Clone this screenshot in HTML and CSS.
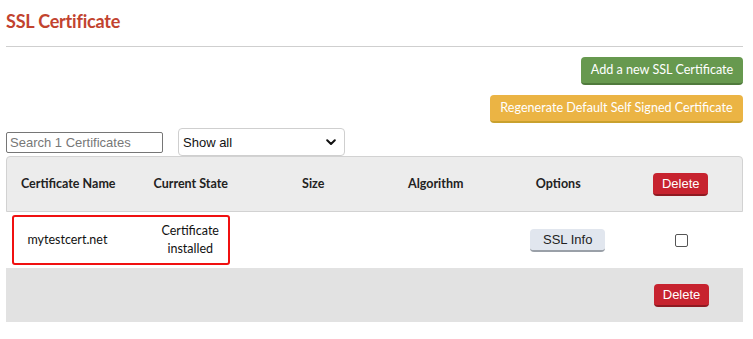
FILE: index.html
```html
<!DOCTYPE html>
<html>
<head>
<meta charset="utf-8">
<link rel="stylesheet" href="styles.css">
</head>
<body>
<div class="page">
  <h1 class="title">SSL Certificate</h1>
  <hr class="rule">
  <div class="actions">
    <button class="btn btn-green">Add a new SSL Certificate</button>
    <button class="btn btn-yellow">Regenerate Default Self Signed Certificate</button>
  </div>
  <div class="filters">
    <input class="search" type="text" placeholder="Search 1 Certificates">
    <div class="select">
      <span>Show all</span>
      <svg width="10" height="7" viewBox="0 0 10 7"><path d="M1.2 1.2 L5 5 L8.8 1.2" fill="none" stroke="#111" stroke-width="2" stroke-linecap="round" stroke-linejoin="round"/></svg>
    </div>
  </div>
  <div class="table">
    <div class="row head">
      <div class="cell">Certificate Name</div>
      <div class="cell">Current State</div>
      <div class="cell">Size</div>
      <div class="cell">Algorithm</div>
      <div class="cell">Options</div>
      <div class="cell"><button class="del">Delete</button></div>
    </div>
    <div class="row body">
      <div class="highlight"></div>
      <div class="cell">mytestcert.net</div>
      <div class="cell">Certificate<br>installed</div>
      <div class="cell"></div>
      <div class="cell"></div>
      <div class="cell"><button class="info">SSL Info</button></div>
      <div class="cell"><span class="check"></span></div>
    </div>
    <div class="row foot">
      <div class="cell"></div>
      <div class="cell"></div>
      <div class="cell"></div>
      <div class="cell"></div>
      <div class="cell"></div>
      <div class="cell"><button class="del">Delete</button></div>
    </div>
  </div>
</div>
</body>
</html>
```

FILE: styles.css
```css
* { box-sizing: border-box; }
html, body { margin: 0; padding: 0; background: #fff; }
body { font-family: Lato, "Liberation Sans", sans-serif; color: #222; }
.page { padding: 0 10px 0 6px; width: 753px; }
.title {
  margin: 0;
  padding-top: 10px;
  font-size: 18px;
  line-height: 22px;
  font-weight: 700;
  color: #c2432f;
  letter-spacing: -0.2px;
}
.rule {
  margin: 14px 0 0 0;
  border: 0;
  border-top: 1px solid #cfcfcf;
  height: 0;
}
.actions {
  display: flex;
  flex-direction: column;
  align-items: flex-end;
  gap: 10px;
  margin-top: 10px;
}
.btn {
  font-family: Lato, sans-serif;
  font-size: 12.6px;
  color: #fff;
  border: 0;
  border-radius: 4px;
  height: 28px;
  padding: 0;
  line-height: 26px;
  white-space: nowrap;
  cursor: pointer;
}
.btn-green {
  width: 162px;
  background: #67994f;
  border-bottom: 2px solid #4f7a3c;
}
.btn-yellow {
  width: 253px;
  background: #ebb444;
  border-bottom: 2px solid #c9a12e;
}
.filters {
  display: flex;
  align-items: center;
  gap: 15px;
  margin-top: 5px;
  height: 28px;
}
.search {
  width: 157px;
  height: 21px;
  border: 1px solid #767676;
  border-radius: 2px;
  font-family: "Liberation Sans", Arial, sans-serif;
  font-size: 13px;
  padding: 0 3px;
  margin-top: 1px;
}
.search::placeholder { color: #777; }
.select {
  width: 167px;
  height: 28px;
  border: 1px solid #cfcfcf;
  border-radius: 4px;
  display: flex;
  align-items: center;
  justify-content: space-between;
  padding: 0 8px 0 4px;
  font-family: "Liberation Sans", Arial, sans-serif;
  font-size: 13px;
  color: #111;
}
.table {
  margin-top: 0;
  width: 737px;
}
.row {
  display: flex;
  align-items: center;
  position: relative;
}
.cell {
  flex: 1 1 0;
  text-align: center;
  font-size: 12.5px;
  line-height: 18px;
  display: flex;
  justify-content: center;
  align-items: center;
}
.head {
  height: 56px;
  background: #ececec;
  border: 1px solid #d2d2d2;
  border-radius: 4px 4px 0 0;
  color: #222;
}
.head .cell { font-weight: 700; }
.body {
  height: 56px;
  background: #fff;
  color: #111;
}
.foot {
  height: 54px;
  background: #e2e2e2;
}
.highlight {
  position: absolute;
  left: 6px;
  top: 3px;
  width: 218px;
  height: 50px;
  border: 2px solid #f01010;
  border-radius: 3px;
}
.del {
  font-family: "Liberation Sans", Arial, sans-serif;
  font-size: 13px;
  color: #fff;
  background: #c7232f;
  border: 0;
  border-bottom: 2px solid #8f1a22;
  border-radius: 4px;
  width: 55px;
  height: 23px;
  padding: 0;
}
.info {
  font-family: "Liberation Sans", Arial, sans-serif;
  font-size: 13px;
  color: #222;
  background: #e1e6ee;
  border: 0;
  border-bottom: 2px solid #9aa0a8;
  border-radius: 4px;
  width: 75px;
  height: 23px;
  padding: 0;
  margin-left: 18px;
}
.check {
  display: inline-block;
  width: 13px;
  height: 13px;
  border: 1px solid #555;
  border-radius: 2px;
  background: #fff;
}
```
